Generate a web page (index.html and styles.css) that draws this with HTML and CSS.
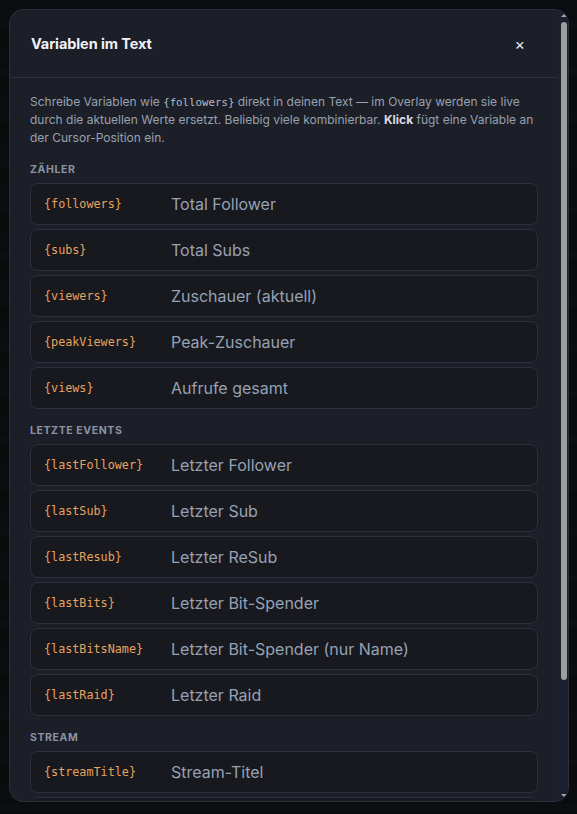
FILE: index.html
```html
<!DOCTYPE html>
<html lang="de">
<head>
<meta charset="utf-8">
<title>Variablen im Text</title>
<link rel="stylesheet" href="styles.css">
</head>
<body>
<div class="backdrop">
  <div class="modal">
    <div class="modal-scroll">
      <div class="modal-header">
        <h2 class="modal-title">Variablen im Text</h2>
        <button class="close-btn" aria-label="Schließen">×</button>
      </div>
      <div class="modal-body">
        <p class="intro">Schreibe Variablen wie <code class="inline-code">{followers}</code> direkt in deinen Text — im Overlay werden sie live durch die aktuellen Werte ersetzt. Beliebig viele kombinierbar. <strong>Klick</strong> fügt eine Variable an der Cursor-Position ein.</p>

        <h3 class="group-title">Zähler</h3>
        <ul class="var-list">
          <li class="var-item"><span class="var-code">{followers}</span><span class="var-label">Total Follower</span></li>
          <li class="var-item"><span class="var-code">{subs}</span><span class="var-label">Total Subs</span></li>
          <li class="var-item"><span class="var-code">{viewers}</span><span class="var-label">Zuschauer (aktuell)</span></li>
          <li class="var-item"><span class="var-code">{peakViewers}</span><span class="var-label">Peak-Zuschauer</span></li>
          <li class="var-item"><span class="var-code">{views}</span><span class="var-label">Aufrufe gesamt</span></li>
        </ul>

        <h3 class="group-title">Letzte Events</h3>
        <ul class="var-list">
          <li class="var-item"><span class="var-code">{lastFollower}</span><span class="var-label">Letzter Follower</span></li>
          <li class="var-item"><span class="var-code">{lastSub}</span><span class="var-label">Letzter Sub</span></li>
          <li class="var-item"><span class="var-code">{lastResub}</span><span class="var-label">Letzter ReSub</span></li>
          <li class="var-item"><span class="var-code">{lastBits}</span><span class="var-label">Letzter Bit-Spender</span></li>
          <li class="var-item"><span class="var-code">{lastBitsName}</span><span class="var-label">Letzter Bit-Spender (nur Name)</span></li>
          <li class="var-item"><span class="var-code">{lastRaid}</span><span class="var-label">Letzter Raid</span></li>
        </ul>

        <h3 class="group-title">Stream</h3>
        <ul class="var-list">
          <li class="var-item"><span class="var-code">{streamTitle}</span><span class="var-label">Stream-Titel</span></li>
          <li class="var-item"><span class="var-code">{streamGame}</span><span class="var-label">Aktuelle Kategorie</span></li>
          <li class="var-item"><span class="var-code">{uptime}</span><span class="var-label">Stream-Dauer</span></li>
        </ul>
      </div>
    </div>
    <div class="scrollbar" aria-hidden="true">
      <span class="sb-arrow sb-up"></span>
      <div class="sb-track"><div class="sb-thumb"></div></div>
      <span class="sb-arrow sb-down"></span>
    </div>
  </div>
</div>
</body>
</html>
```
FILE: styles.css
```css
* { box-sizing: border-box; }

html, body {
  margin: 0;
  height: 100%;
}

body {
  background-color: #0c0e12;
  background-image: repeating-linear-gradient(180deg,
    #0d0f13 0px, #0d0f13 22px,
    #111318 22px, #111318 30px,
    #0b0d10 30px, #0b0d10 46px);
  font-family: Inter, "Noto Sans", sans-serif;
  overflow: hidden;
}

.backdrop {
  padding: 9px 8px 12px 9px;
  height: 100%;
  display: flex;
  background: rgba(8, 9, 12, 0.45);
}

.modal {
  flex: 1;
  display: flex;
  background: #1c1f27;
  border: 1px solid #2b303b;
  border-radius: 14px;
  overflow: hidden;
}

.modal-scroll {
  flex: 1;
  min-width: 0;
  overflow: hidden;
}

.modal-header {
  display: flex;
  align-items: center;
  justify-content: space-between;
  height: 68px;
  padding: 0 33px 0 21px;
  border-bottom: 1px solid #2b303b;
}

.modal-title {
  margin: 0;
  font-size: 14.5px;
  font-weight: 700;
  color: #eef1f5;
  letter-spacing: -0.1px;
}

.close-btn {
  background: none;
  border: none;
  padding: 0;
  color: #e4e7ec;
  font-family: Inter, sans-serif;
  font-size: 16px;
  line-height: 1;
  cursor: pointer;
}

.modal-body {
  padding: 15px 20px 20px 20px;
}

.intro {
  margin: 0;
  font-size: 12px;
  line-height: 18px;
  color: #98a1b0;
}

.intro strong {
  color: #d7dce4;
  font-weight: 700;
}

.inline-code {
  font-family: "DejaVu Sans Mono", monospace;
  font-size: 10.75px;
  line-height: 0;
  color: #b3bbc8;
}

.group-title {
  margin: 15px 0 5px;
  font-size: 10.5px;
  line-height: 16px;
  font-weight: 700;
  letter-spacing: 0.6px;
  text-transform: uppercase;
  color: #8a93a3;
}

.var-list {
  list-style: none;
  margin: 0;
  padding: 0;
  display: flex;
  flex-direction: column;
  gap: 4px;
}

.var-list + .group-title {
  margin-top: 14px;
}

.var-item {
  display: flex;
  align-items: center;
  height: 42px;
  padding: 0 13px;
  background: #17191e;
  border: 1px solid #2c313c;
  border-radius: 8px;
}

.var-code {
  width: 127px;
  flex-shrink: 0;
  font-family: "DejaVu Sans Mono", monospace;
  font-size: 11.75px;
  color: #e6a35e;
}

.var-label {
  font-size: 16px;
  color: #96a1b4;
}

/* drawn scrollbar */
.scrollbar {
  width: 10px;
  flex-shrink: 0;
  display: flex;
  flex-direction: column;
  align-items: center;
  background: #1b2030;
  padding: 4px 0 4px;
}

.sb-arrow {
  width: 0;
  height: 0;
  border-left: 3px solid transparent;
  border-right: 3px solid transparent;
  margin-left: 1px;
}

.sb-up {
  border-bottom: 3px solid #a3a3a3;
  margin-bottom: 5px;
}

.sb-down {
  border-top: 3px solid #a3a3a3;
  margin-top: 5px;
}

.sb-track {
  flex: 1;
  width: 100%;
  display: flex;
  justify-content: center;
}

.sb-thumb {
  width: 6px;
  height: 658px;
  margin-left: 1px;
  background: #9d9d9d;
  border-radius: 3px;
}
```
